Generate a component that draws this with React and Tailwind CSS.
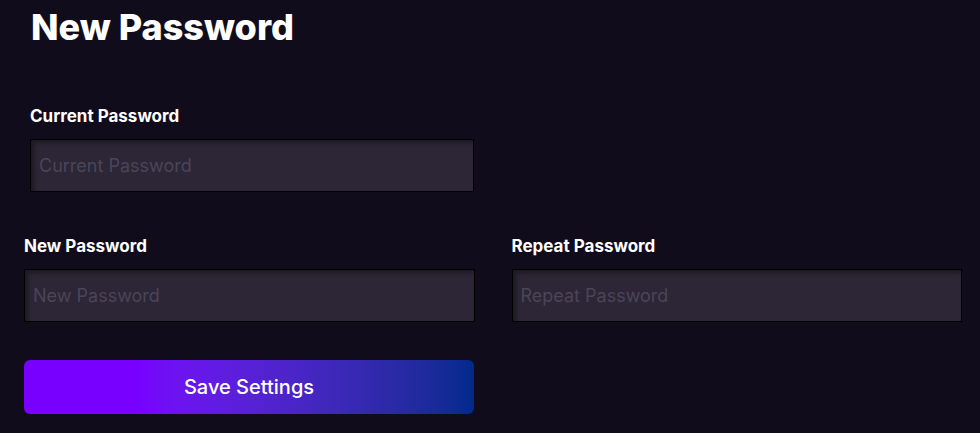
import React from 'react';

const Field = ({ label, placeholder }) => (
    <div className="flex flex-col">
        <label className="text-[17px] leading-6 font-bold text-white mb-[11px]">{label}</label>
        <input
            type="password"
            placeholder={placeholder}
            className="h-[53px] w-full bg-[#2c2636] border border-black px-2 text-[18px] text-white placeholder:text-[#4b4559] outline-none shadow-[inset_3px_3px_4px_rgba(0,0,0,0.35)]"
        />
    </div>
);

const App = () => {
    return (
        <div className="min-h-[433px] w-[980px] bg-[#110c1b] font-['Inter',sans-serif] overflow-hidden">
            <div className="pl-[24px] pr-[18px] pt-[7px]">
                <h1 className="pl-[7px] text-[36px] leading-10 font-extrabold text-white">New Password</h1>

                <div className="mt-[57px] ml-[6px] w-[444px]">
                    <Field label="Current Password" placeholder="Current Password" />
                </div>

                <div className="mt-[42px] grid grid-cols-2 gap-[37px]">
                    <Field label="New Password" placeholder="New Password" />
                    <Field label="Repeat Password" placeholder="Repeat Password" />
                </div>

                <button className="mt-[38px] w-[450px] h-[54px] rounded-md bg-gradient-to-r from-[#7800ff] from-25% to-[#002a8c] text-white text-[20px] leading-7 font-medium">
                    Save Settings
                </button>
            </div>
        </div>
    );
};

export default App;
